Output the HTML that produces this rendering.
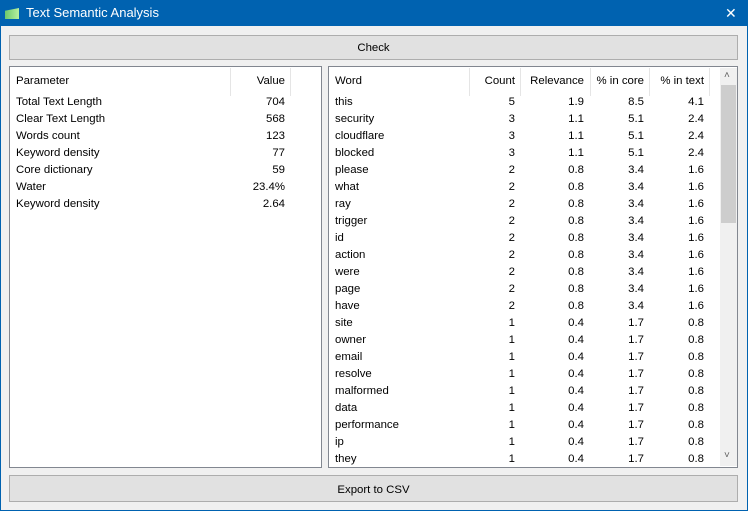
<!DOCTYPE html>
<html><head><meta charset="utf-8"><style>
*{margin:0;padding:0;box-sizing:border-box}
body{width:748px;height:511px;background:#f0f0f0;font-family:"Liberation Sans",sans-serif;font-size:11.4px;color:#000;position:relative;overflow:hidden}
.win{position:absolute;left:0;top:0;width:748px;height:511px;border:1px solid #0062b0;border-top:none}
.title{position:absolute;left:0;top:0;width:748px;height:26px;background:#0062b0;color:#fff;font-size:13px}
.title .t{position:absolute;left:26px;top:5px}
.icon{position:absolute;left:5px;top:8px;width:14px;height:11px;background:linear-gradient(90deg,#6cc86c,#b8f0a0);clip-path:polygon(0 25%,100% 0,100% 100%,0 100%)}
.x{position:absolute;left:725px;top:5px;font-size:14px;font-weight:300}
.btn{position:absolute;background:#e1e1e1;border:1px solid #adadad;text-align:center}
.panel{position:absolute;background:#fff;border:1px solid #828790}
.a{position:absolute;white-space:nowrap}
.r{text-align:right}
.sep{position:absolute;top:1px;width:1px;height:28px;background:#e5e5e5}
</style></head><body>
<div class="win"></div>
<div class="title"><div class="icon"></div><span class="t">Text Semantic Analysis</span><span class="x">✕</span></div>
<div class="btn" style="left:9px;top:35px;width:729px;height:25px;line-height:25px">Check</div>
<div class="btn" style="left:9px;top:475px;width:729px;height:27px;line-height:28px">Export to CSV</div>

<div class="panel" style="left:9px;top:66px;width:313px;height:402px">
<div class="sep" style="left:220px"></div><div class="sep" style="left:280px"></div>
<div class="a" style="left:6px;top:8px">Parameter</div>
<div class="a r" style="left:220px;width:55px;top:8px">Value</div>
<div id="L"></div>
</div>

<div class="panel" style="left:328px;top:66px;width:410px;height:402px">
<div class="sep" style="left:140px"></div><div class="sep" style="left:191px"></div><div class="sep" style="left:261px"></div><div class="sep" style="left:320px"></div><div class="sep" style="left:380px"></div>
<div class="a" style="left:6px;top:8px">Word</div>
<div class="a r" style="left:140px;width:46px;top:8px">Count</div>
<div class="a r" style="left:191px;width:64px;top:8px">Relevance</div>
<div class="a r" style="left:261px;width:54px;top:8px">% in core</div>
<div class="a r" style="left:320px;width:55px;top:8px">% in text</div>
<div style="position:absolute;left:391px;top:1px;width:17px;height:398px;background:#f0f0f0"></div>
<div style="position:absolute;left:392px;top:18px;width:15px;height:138px;background:#cdcdcd"></div>
<div class="a" style="left:395px;top:3px;color:#606060;font-size:10px">˄</div>
<div class="a" style="left:395px;top:383px;color:#606060;font-size:10px">˅</div>
<div id="R"></div>
</div>
<script>
var L=[["Total Text Length","704"],["Clear Text Length","568"],["Words count","123"],["Keyword density","77"],["Core dictionary","59"],["Water","23.4%"],["Keyword density","2.64"]];
var h="";L.forEach(function(r,i){var y=29+i*17;h+='<div class="a" style="left:6px;top:'+y+'px">'+r[0]+'</div><div class="a r" style="left:200px;width:75px;top:'+y+'px">'+r[1]+'</div>';});
document.getElementById("L").innerHTML=h;
var W=[["this",5,"1.9","8.5","4.1"],["security",3,"1.1","5.1","2.4"],["cloudflare",3,"1.1","5.1","2.4"],["blocked",3,"1.1","5.1","2.4"]];
["please","what","ray","trigger","id","action","were","page","have"].forEach(function(w){W.push([w,2,"0.8","3.4","1.6"])});
["site","owner","email","resolve","malformed","data","performance","ip","they"].forEach(function(w){W.push([w,1,"0.4","1.7","0.8"])});
h="";W.forEach(function(r,i){var y=29+i*17;h+='<div class="a" style="left:6px;top:'+y+'px">'+r[0]+'</div>'+
'<div class="a r" style="left:140px;width:46px;top:'+y+'px">'+r[1]+'</div>'+
'<div class="a r" style="left:191px;width:64px;top:'+y+'px">'+r[2]+'</div>'+
'<div class="a r" style="left:261px;width:54px;top:'+y+'px">'+r[3]+'</div>'+
'<div class="a r" style="left:320px;width:55px;top:'+y+'px">'+r[4]+'</div>';});
document.getElementById("R").innerHTML=h;
</script>
</body></html>
